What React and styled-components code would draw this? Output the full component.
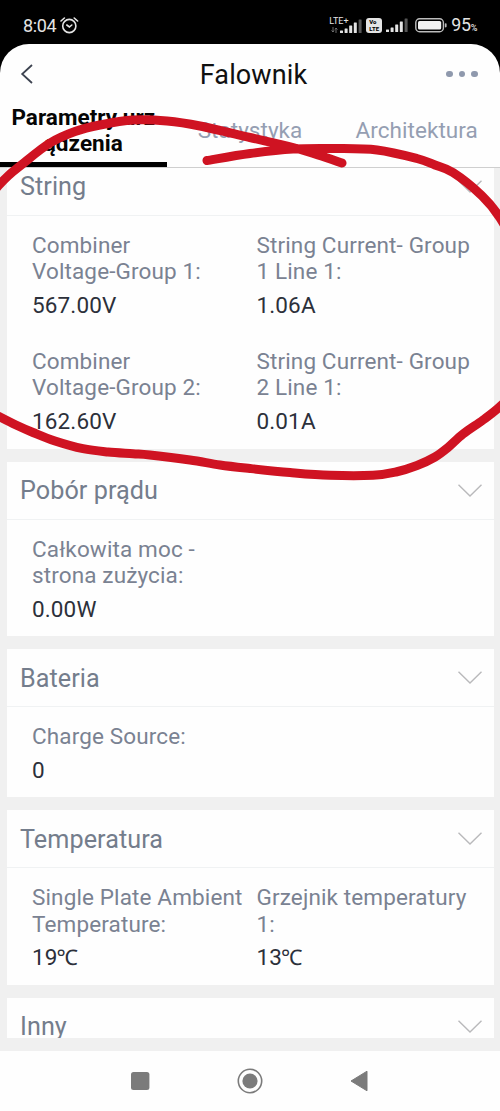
import React from "react";
import styled, { createGlobalStyle } from "styled-components";

const Global = createGlobalStyle`
  * { box-sizing: border-box; }
  body { margin: 0; background: #000; }
`;

const Screen = styled.div`
  position: relative;
  width: 500px;
  height: 1111px;
  overflow: hidden;
  display: flex;
  flex-direction: column;
  background: #000;
  font-family: Roboto, "Noto Sans", sans-serif;
`;

const StatusBar = styled.div`
  height: 43.5px;
  flex: none;
  display: flex;
  justify-content: space-between;
  padding: 13px 23px 0 23px;
  color: #e4e4e4;
`;

const StatusGroup = styled.div`
  display: flex;
  align-items: center;
  height: 25px;
`;

const Clock = styled.span`
  font-size: 18px;
  line-height: 25px;
  letter-spacing: -0.4px;
  margin-right: 3.5px;
`;

const Network = styled.span`
  position: relative;
  display: flex;
  width: 33px;
  height: 22px;
  margin-right: 4px;
`;

const NetworkLabel = styled.span`
  position: absolute;
  left: 0;
  top: 1px;
  font-size: 9px;
  line-height: 10px;
`;

const VoLte = styled.span`
  display: flex;
  flex-direction: column;
  align-items: flex-start;
  width: 16px;
  height: 15px;
  padding: 1px 2px 0 3px;
  margin-right: 4px;
  border-radius: 3px;
  background: #e4e4e4;
  color: #000;
  font-size: 6px;
  font-weight: 800;
  line-height: 6.5px;
`;

const Percent = styled.span`
  font-size: 17.8px;
  line-height: 25px;
  margin: 2px 0 0 4px;
  letter-spacing: -0.3px;
  small { font-size: 9px; font-weight: 500; }
`;

const AppPane = styled.div`
  flex: 1;
  min-height: 0;
  display: flex;
  flex-direction: column;
  background: #fefefe;
  border-radius: 29px 29px 0 0;
  overflow: hidden;
`;

const TitleBar = styled.header`
  height: 61.5px;
  flex: none;
  display: grid;
  grid-template-columns: 60px 1fr 60px;
  align-items: center;
  padding: 0 20px;
`;

const Title = styled.h1`
  margin: 0;
  padding: 2px 0 0 7px;
  text-align: center;
  font-size: 27px;
  font-weight: 400;
  line-height: 32px;
  letter-spacing: 0.1px;
  color: #101010;
`;

const More = styled.span`
  display: flex;
  justify-content: flex-end;
  gap: 6px;
  padding-right: 2.4px;
  i { width: 6.4px; height: 6.4px; border-radius: 50%; background: #8f99ad; }
`;

const Tabs = styled.nav`
  height: 62.5px;
  flex: none;
  display: grid;
  grid-template-columns: repeat(3, 1fr);
  grid-template-rows: 61.5px;
  border-bottom: 1px solid #cfcfcf;
`;

const Tab = styled.div`
  display: flex;
  align-items: center;
  justify-content: center;
  padding-bottom: ${(p) => (p.$active ? "6.5px" : "11.5px")};
  border-bottom: ${(p) => (p.$active ? "5px solid #000" : "0")};
  text-align: center;
  white-space: pre-line;
  font-size: 22.5px;
  line-height: 26.4px;
  font-weight: ${(p) => (p.$active ? 700 : 400)};
  letter-spacing: 0.05px;
  color: ${(p) => (p.$active ? "#050505" : "#959eb2")};
`;

const List = styled.main`
  height: 870.5px;
  flex: none;
  overflow: hidden;
  display: flex;
  flex-direction: column;
  gap: 13px;
  padding: 0 6.5px 0 7px;
  background: #f0f0f0;
`;

const Card = styled.section`
  flex: none;
  background: #fefefe;
  margin-top: ${(p) => (p.$scrolled ? "-10px" : "0")};
`;

const CardHeader = styled.div`
  height: 58px;
  display: flex;
  align-items: center;
  justify-content: space-between;
  padding: 0 12px 0 13px;
  border-bottom: 1px solid #f0f2f3;
`;

const CardTitle = styled.h2`
  margin: 0;
  padding-top: 2px;
  font-size: 25.2px;
  line-height: 30px;
  font-weight: 400;
  letter-spacing: 0.06px;
  color: #747d8c;
`;

const Fields = styled.div`
  display: grid;
  grid-template-columns: 224.5px 1fr;
  padding-left: 25px;
`;

const Field = styled.div`
  padding: 16px 0 14.1px;
`;

const Label = styled.div`
  font-size: 22.5px;
  line-height: 26.4px;
  letter-spacing: 0.13px;
  white-space: pre-line;
  color: #7a8292;
`;

const Value = styled.div`
  margin-top: 7.2px;
  font-size: 22.5px;
  line-height: 26.4px;
  letter-spacing: 0.13px;
  color: #2c303a;
`;

const Unit = styled.span`
  margin-left: -1px;
  font-size: 21.5px;
  line-height: 1;
`;

const ListEnd = styled.div`
  height: 13px;
  flex: none;
  background: #f0f0f0;
`;

const NavBar = styled.footer`
  flex: 1;
  display: flex;
  justify-content: center;
  align-items: center;
  gap: 84px;
  padding-right: 1px;
`;

const Annotation = styled.svg`
  position: absolute;
  inset: 0;
  pointer-events: none;
`;

const sections = [
  {
    title: "String",
    fields: [
      ["Combiner\nVoltage-Group 1:", "567.00V"],
      ["String Current- Group\n1 Line 1:", "1.06A"],
      ["Combiner\nVoltage-Group 2:", "162.60V"],
      ["String Current- Group\n2 Line 1:", "0.01A"],
    ],
  },
  { title: "Pobór prądu", fields: [["Całkowita moc -\nstrona zużycia:", "0.00W"]] },
  { title: "Bateria", fields: [["Charge Source:", "0"]] },
  {
    title: "Temperatura",
    fields: [
      ["Single Plate Ambient\nTemperature:", "19", "℃"],
      ["Grzejnik temperatury\n1:", "13", "℃"],
    ],
  },
  { title: "Inny", fields: [] },
];

const strokePoints = [
  [342, 163], [318, 155], [293, 147.5], [250, 137.5], [200, 126], [167, 121],
  [133, 120], [100, 125], [75, 131.5], [50, 143], [25, 162], [0, 184],
  [-35, 230], [-50, 300], [-40, 380], [-15, 409], [0, 417], [16, 425], [33, 432.5],
  [55, 441], [83, 448.7], [108, 452], [133, 453.7],
  [150, 455], [190, 460], [220, 465], [250, 468.5], [290, 472.5], [330, 475.3],
  [373, 475.3], [396, 472], [417, 465.5], [435, 457], [448, 447.5], [463, 434],
  [483, 420], [500, 406.5], [520, 386], [535, 350], [530, 275], [500, 218], [480, 194],
  [453, 172.5], [435, 165], [417, 158.5], [377, 150], [335, 148.5], [293, 149],
  [250, 153.5], [207, 160.5],
];

const smoothPath = (pts) =>
  pts.slice(0, -1).reduce((d, p, i) => {
    const before = pts[i - 1] || p;
    const next = pts[i + 1];
    const after = pts[i + 2] || next;
    const c1 = [p[0] + (next[0] - before[0]) / 6, p[1] + (next[1] - before[1]) / 6];
    const c2 = [next[0] - (after[0] - p[0]) / 6, next[1] - (after[1] - p[1]) / 6];
    return `${d}C${c1} ${c2} ${next}`;
  }, `M${pts[0]}`);

const AlarmIcon = () => (
  <svg width="19" height="18" viewBox="0 0 19 18" fill="none" stroke="#e4e4e4" strokeWidth="1.6" strokeLinecap="round">
    <circle cx="9.3" cy="9" r="6.6" />
    <path d="M1 4 4.4 1M14.2 1l3.4 3M6.8 8l2.6 2 2.4-2" />
  </svg>
);

const SignalIcon = ({ className }) => (
  <svg className={className} width="22" height="15" viewBox="0 0 22 15" fill="#e4e4e4">
    <rect x="0" y="11.5" width="3" height="2.5" rx=".5" />
    <rect x="4.6" y="9.5" width="3" height="4.5" rx=".5" />
    <rect x="9.2" y="6.5" width="3" height="7.5" rx=".5" />
    <rect x="13.8" y="3.5" width="3" height="10.5" rx=".5" />
    <rect x="18.6" y="0.5" width="3" height="13.5" rx=".5" fill="#555" />
  </svg>
);

const NetworkSignal = styled(SignalIcon)`
  position: absolute;
  left: 11px;
  top: 4.5px;
`;

const DataArrows = styled.svg`
  position: absolute;
  left: 2px;
  top: 12px;
`;

const SecondSignal = styled(SignalIcon)`
  margin-right: 7px;
`;

const BatteryIcon = () => (
  <svg width="32" height="15" viewBox="0 0 32 15" fill="none">
    <rect x=".8" y=".8" width="27.6" height="12.9" rx="3.8" stroke="#bcbcbc" strokeWidth="1.4" />
    <rect x="3" y="3" width="23.2" height="8.6" rx="1.6" fill="#f1f1f1" />
    <rect x="29.8" y="5.2" width="1.8" height="4.2" rx=".8" fill="#bcbcbc" />
  </svg>
);

const Chevron = () => (
  <svg width="24" height="13" viewBox="0 0 24 13" fill="none" stroke="#b9b9bb" strokeWidth="1.4">
    <path d="M.5.7 12 12 23.5.7" />
  </svg>
);

export default function App() {
  return (
    <Screen>
      <Global />
      <StatusBar>
        <StatusGroup>
          <Clock>8:04</Clock>
          <AlarmIcon />
        </StatusGroup>
        <StatusGroup>
          <Network>
            <NetworkLabel>LTE+</NetworkLabel>
            <DataArrows width="7" height="6" viewBox="0 0 7 6" fill="none" stroke="#777" strokeWidth=".9">
              <path d="M2 0v5M.5 3.5 2 5l1-1.5M5 6V1M4 2.5 5 1l1.5 1.5" />
            </DataArrows>
            <NetworkSignal />
          </Network>
          <VoLte>
            <span>Vo</span>
            <span>LTE</span>
          </VoLte>
          <SecondSignal />
          <BatteryIcon />
          <Percent>95<small>%</small></Percent>
        </StatusGroup>
      </StatusBar>
      <AppPane>
        <TitleBar>
          <svg width="14" height="20" viewBox="0 0 14 20" fill="none" stroke="#3d4350" strokeWidth="1.8">
            <path d="M12 1 2.2 10 12 19" />
          </svg>
          <Title>Falownik</Title>
          <More><i /><i /><i /></More>
        </TitleBar>
        <Tabs>
          <Tab $active>{"Parametry urz\nądzenia"}</Tab>
          <Tab>Statystyka</Tab>
          <Tab>Architektura</Tab>
        </Tabs>
        <List>
          {sections.map((s, i) => (
            <Card key={s.title} $scrolled={i === 0}>
              <CardHeader>
                <CardTitle>{s.title}</CardTitle>
                <Chevron />
              </CardHeader>
              <Fields>
                {s.fields.map(([label, value, unit]) => (
                  <Field key={label}>
                    <Label>{label}</Label>
                    <Value>{value}{unit && <Unit>{unit}</Unit>}</Value>
                  </Field>
                ))}
              </Fields>
            </Card>
          ))}
        </List>
        <ListEnd />
        <NavBar>
          <svg width="25" height="26" viewBox="0 0 25 26">
            <rect x="3" y="4" width="18.4" height="18" rx="2.5" fill="#7b7b7b" />
          </svg>
          <svg width="26" height="26" viewBox="0 0 26 26">
            <circle cx="13" cy="13" r="11.7" fill="none" stroke="#7b7b7b" strokeWidth="1.6" />
            <circle cx="13" cy="13" r="7.6" fill="#7b7b7b" />
          </svg>
          <svg width="25" height="26" viewBox="0 0 25 26">
            <path d="M4 13 20 3.2v19.6z" fill="#7b7b7b" stroke="#7b7b7b" strokeLinejoin="round" />
          </svg>
        </NavBar>
      </AppPane>
      <Annotation width="500" height="1111" viewBox="0 0 500 1111" fill="none" stroke="#cf1322" strokeWidth="9" strokeLinecap="round" strokeLinejoin="round">
        <path d={smoothPath(strokePoints)} />
      </Annotation>
    </Screen>
  );
}
